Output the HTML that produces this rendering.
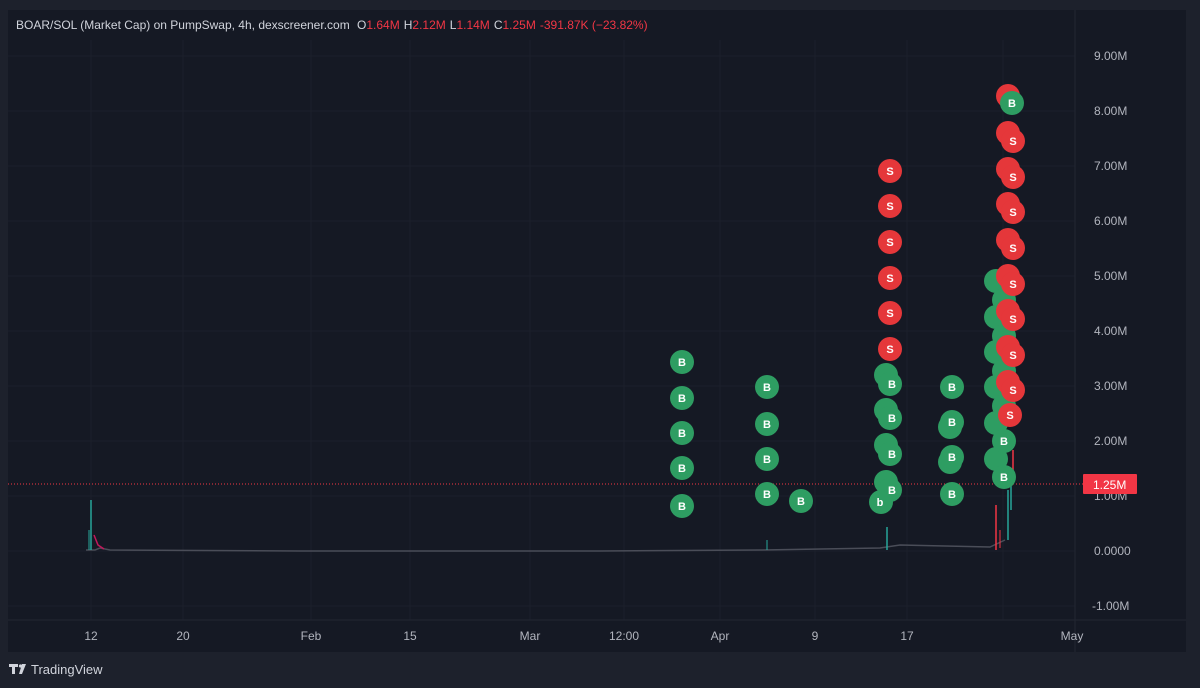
<!DOCTYPE html>
<html><head><meta charset="utf-8"><style>
html,body{margin:0;padding:0;width:1200px;height:688px;overflow:hidden;background:#1d212c;font-family:"Liberation Sans",sans-serif}
</style></head><body>
<svg width="1200" height="688" viewBox="0 0 1200 688" xmlns="http://www.w3.org/2000/svg" font-family="Liberation Sans, sans-serif">
<rect x="0" y="0" width="1200" height="688" fill="#1d212c"/>
<rect x="8" y="10" width="1178" height="642" fill="#151924"/>
<g stroke="#1c202b" stroke-width="1">
<line x1="8" y1="56" x2="1075" y2="56"/><line x1="8" y1="111" x2="1075" y2="111"/><line x1="8" y1="166" x2="1075" y2="166"/><line x1="8" y1="221" x2="1075" y2="221"/><line x1="8" y1="276" x2="1075" y2="276"/><line x1="8" y1="331" x2="1075" y2="331"/><line x1="8" y1="386" x2="1075" y2="386"/><line x1="8" y1="441" x2="1075" y2="441"/><line x1="8" y1="496" x2="1075" y2="496"/><line x1="8" y1="551" x2="1075" y2="551"/><line x1="8" y1="606" x2="1075" y2="606"/>
<line x1="91" y1="40" x2="91" y2="620"/><line x1="183" y1="40" x2="183" y2="620"/><line x1="311" y1="40" x2="311" y2="620"/><line x1="410" y1="40" x2="410" y2="620"/><line x1="530" y1="40" x2="530" y2="620"/><line x1="624" y1="40" x2="624" y2="620"/><line x1="720" y1="40" x2="720" y2="620"/><line x1="815" y1="40" x2="815" y2="620"/><line x1="907" y1="40" x2="907" y2="620"/><line x1="1003" y1="40" x2="1003" y2="620"/>
</g>
<line x1="1075" y1="10" x2="1075" y2="652" stroke="#222632"/>
<line x1="8" y1="620" x2="1186" y2="620" stroke="#222632"/>
<text x="16" y="29" font-size="12" fill="#d1d4dc">BOAR/SOL (Market Cap) on PumpSwap, 4h, dexscreener.com <tspan dx="4">O</tspan><tspan fill="#f23645">1.64M</tspan><tspan dx="4">H</tspan><tspan fill="#f23645">2.12M</tspan><tspan dx="4">L</tspan><tspan fill="#f23645">1.14M</tspan><tspan dx="4">C</tspan><tspan fill="#f23645">1.25M</tspan><tspan dx="4" fill="#f23645">-391.87K (−23.82%)</tspan></text>
<g font-size="12" fill="#b2b5be">
<text x="1094" y="60">9.00M</text><text x="1094" y="115">8.00M</text><text x="1094" y="170">7.00M</text><text x="1094" y="225">6.00M</text><text x="1094" y="280">5.00M</text><text x="1094" y="335">4.00M</text><text x="1094" y="390">3.00M</text><text x="1094" y="445">2.00M</text><text x="1094" y="500">1.00M</text><text x="1094" y="555">0.0000</text><text x="1092" y="610">-1.00M</text>
</g>
<g font-size="12" fill="#b2b5be" text-anchor="middle">
<text x="91" y="640">12</text><text x="183" y="640">20</text><text x="311" y="640">Feb</text><text x="410" y="640">15</text><text x="530" y="640">Mar</text><text x="624" y="640">12:00</text><text x="720" y="640">Apr</text><text x="815" y="640">9</text><text x="907" y="640">17</text><text x="1072" y="640">May</text>
</g>
<line x1="8" y1="484" x2="1083" y2="484" stroke="#f23645" stroke-width="1" stroke-dasharray="1,2"/>
<rect x="1083" y="474" width="54" height="20" fill="#f23645" rx="1"/>
<text x="1093" y="489" font-size="12" fill="#fff">1.25M</text>
<polyline points="86,550 95,550 100,548 110,550 300,551 600,551 760,550 880,548 900,545 990,547 1005,540" fill="none" stroke="#4a4d58" stroke-width="1.5"/>
<line x1="91" y1="500" x2="91" y2="550" stroke="#26a69a" stroke-width="1.5"/>
<line x1="89" y1="530" x2="89" y2="550" stroke="#26a69a"/>
<path d="M94 535 L98 545 L104 549" stroke="#c2185b" fill="none" stroke-width="1.5"/>
<line x1="887" y1="527" x2="887" y2="550" stroke="#26a69a" stroke-width="1.5"/>
<line x1="767" y1="540" x2="767" y2="550" stroke="#26a69a"/>
<line x1="996" y1="505" x2="996" y2="550" stroke="#f23645" stroke-width="1.5"/>
<line x1="1000" y1="530" x2="1000" y2="548" stroke="#f23645"/>
<line x1="1008" y1="490" x2="1008" y2="540" stroke="#26a69a" stroke-width="1.5"/>
<line x1="1011" y1="480" x2="1011" y2="510" stroke="#26a69a" stroke-width="1.5"/>
<line x1="1013" y1="450" x2="1013" y2="470" stroke="#f23645" stroke-width="1.5"/>
<g font-size="11" font-weight="bold" fill="#fff" text-anchor="middle">
<g fill="#2e9d62">
<circle cx="682" cy="362" r="12"/><circle cx="682" cy="398" r="12"/><circle cx="682" cy="433" r="12"/><circle cx="682" cy="468" r="12"/><circle cx="682" cy="506" r="12"/>
<circle cx="767" cy="387" r="12"/><circle cx="767" cy="424" r="12"/><circle cx="767" cy="459" r="12"/><circle cx="767" cy="494" r="12"/><circle cx="801" cy="501" r="12"/>
<circle cx="886" cy="375" r="12"/><circle cx="890" cy="384" r="12"/><circle cx="886" cy="410" r="12"/><circle cx="890" cy="418" r="12"/><circle cx="886" cy="445" r="12"/><circle cx="890" cy="454" r="12"/><circle cx="886" cy="482" r="12"/><circle cx="890" cy="490" r="12"/><circle cx="881" cy="502" r="12"/>
<circle cx="952" cy="387" r="12"/><circle cx="950" cy="427" r="12"/><circle cx="952" cy="422" r="12"/><circle cx="950" cy="462" r="12"/><circle cx="952" cy="457" r="12"/><circle cx="952" cy="494" r="12"/>
<circle cx="996" cy="281" r="12"/><circle cx="996" cy="317" r="12"/><circle cx="996" cy="352" r="12"/><circle cx="996" cy="387" r="12"/><circle cx="996" cy="423" r="12"/><circle cx="996" cy="459" r="12"/>
<circle cx="1004" cy="300" r="12"/><circle cx="1004" cy="336" r="12"/><circle cx="1004" cy="371" r="12"/><circle cx="1004" cy="406" r="12"/>
<circle cx="1004" cy="441" r="12"/><circle cx="1004" cy="477" r="12"/>
</g>
<g fill="#e5373a">
<circle cx="890" cy="171" r="12"/><circle cx="890" cy="206" r="12"/><circle cx="890" cy="242" r="12"/><circle cx="890" cy="278" r="12"/><circle cx="890" cy="313" r="12"/><circle cx="890" cy="349" r="12"/>
<circle cx="1008" cy="96" r="12"/>
<circle cx="1008" cy="133" r="12"/><circle cx="1013" cy="141" r="12"/>
<circle cx="1008" cy="169" r="12"/><circle cx="1013" cy="177" r="12"/>
<circle cx="1008" cy="204" r="12"/><circle cx="1013" cy="212" r="12"/>
<circle cx="1008" cy="240" r="12"/><circle cx="1013" cy="248" r="12"/>
<circle cx="1008" cy="276" r="12"/><circle cx="1013" cy="284" r="12"/>
<circle cx="1008" cy="311" r="12"/><circle cx="1013" cy="319" r="12"/>
<circle cx="1008" cy="347" r="12"/><circle cx="1013" cy="355" r="12"/>
<circle cx="1008" cy="382" r="12"/><circle cx="1013" cy="390" r="12"/>
<circle cx="1010" cy="415" r="12"/>
</g>
<circle cx="1012" cy="103" r="12" fill="#2e9d62"/>
<text x="1012" y="107">B</text>
<g>
<text x="682" y="366">B</text><text x="682" y="402">B</text><text x="682" y="437">B</text><text x="682" y="472">B</text><text x="682" y="510">B</text>
<text x="767" y="391">B</text><text x="767" y="428">B</text><text x="767" y="463">B</text><text x="767" y="498">B</text><text x="801" y="505">B</text>
<text x="892" y="388">B</text><text x="892" y="422">B</text><text x="892" y="458">B</text><text x="892" y="494">B</text><text x="880" y="506">b</text>
<text x="952" y="391">B</text><text x="952" y="426">B</text><text x="952" y="461">B</text><text x="952" y="498">B</text>
<text x="1004" y="445">B</text><text x="1004" y="481">B</text>
<text x="890" y="175">S</text><text x="890" y="210">S</text><text x="890" y="246">S</text><text x="890" y="282">S</text><text x="890" y="317">S</text><text x="890" y="353">S</text>
<text x="1013" y="145">S</text><text x="1013" y="181">S</text><text x="1013" y="216">S</text><text x="1013" y="252">S</text><text x="1013" y="288">S</text><text x="1013" y="323">S</text><text x="1013" y="359">S</text><text x="1013" y="394">S</text><text x="1010" y="419">S</text>
</g>
</g>
<g fill="#d1d4dc">
<path d="M9 664 h9 v3 h-3 v7 h-3 v-7 h-3z"/>
<circle cx="20.5" cy="666" r="1.6"/>
<path d="M22 664 h4 l-4 10 h-3z"/>
</g>
<text x="31" y="674" font-size="13" fill="#d1d4dc">TradingView</text>
</svg>
</body></html>
